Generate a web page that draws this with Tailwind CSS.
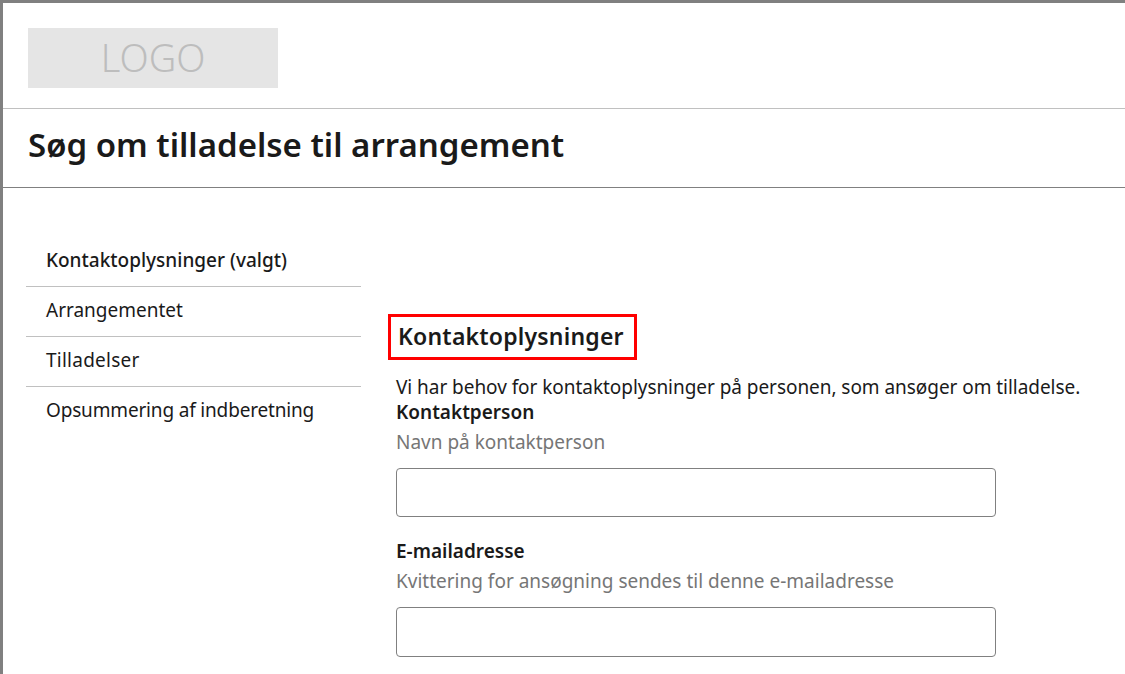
<!DOCTYPE html>
<html lang="da">
<head>
  <meta charset="UTF-8" />
  <title>Søg om tilladelse til arrangement</title>
  <script src="https://cdn.jsdelivr.net/npm/@tailwindcss/browser@4"></script>
</head>
<body class="bg-white h-[674px] overflow-hidden font-['Noto_Sans',sans-serif] text-[#1a1a1a]">
  <div class="h-full border-t-[3px] border-l-[3px] border-[#808080] overflow-hidden">
    <!-- Header -->
    <header class="h-[106px] pl-[25px] pt-[25px] border-b border-[#c0c0c0]">
      <div class="w-[250px] h-[60px] pb-[2px] bg-[#e5e5e5] flex items-center justify-center text-[38px] font-light text-[#bdbdbd]">LOGO</div>
    </header>
    <div class="h-[79px] pl-[25px] pb-[6px] flex items-center border-b border-[#808080]">
      <h1 class="text-[33px] font-semibold whitespace-nowrap">Søg om tilladelse til arrangement</h1>
    </div>

    <div class="flex">
      <!-- Side menu -->
      <nav class="w-[335px] ml-[23px] mt-[48px] shrink-0 text-[19px]">
        <div class="h-[51px] pl-5 pb-[2px] flex items-center border-b border-[#c0c0c0] font-medium whitespace-nowrap">Kontaktoplysninger (valgt)</div>
        <div class="h-[50px] pl-5 pb-[2px] flex items-center border-b border-[#c0c0c0]">Arrangementet</div>
        <div class="h-[50px] pl-5 pb-[2px] flex items-center border-b border-[#c0c0c0] tracking-[0.25px]">Tilladelser</div>
        <div class="h-[48px] pl-5 pb-[2px] flex items-center tracking-[-0.17px]">Opsummering af indberetning</div>
      </nav>

      <!-- Form -->
      <main class="ml-[27px] mt-[126px] flex-1 text-[19px]">
        <h2 class="w-[249px] border-[3px] border-[#ff0000] px-[7px] pb-[2px] h-[46px] flex items-center text-[23px] font-semibold tracking-[0.2px] whitespace-nowrap">Kontaktoplysninger</h2>
        <p class="ml-[8px] mt-[14px] leading-[27px] tracking-[-0.05px] whitespace-nowrap">Vi har behov for kontaktoplysninger på personen, som ansøger om tilladelse.</p>
        <label class="block ml-[8px] leading-[23px] font-semibold">Kontaktperson</label>
        <p class="ml-[8px] mt-[7px] leading-[23px] text-[#767676]">Navn på kontaktperson</p>
        <input type="text" class="block ml-[8px] mt-[14px] w-[600px] h-[49px] border border-[#808080] rounded-[4px]" />
        <label class="block ml-[8px] mt-[23px] leading-[23px] font-semibold">E-mailadresse</label>
        <p class="ml-[8px] mt-[7px] leading-[23px] text-[#767676]">Kvittering for ansøgning sendes til denne e-mailadresse</p>
        <input type="text" class="block ml-[8px] mt-[14px] w-[600px] h-[50px] border border-[#808080] rounded-[4px]" />
      </main>
    </div>
  </div>
</body>
</html>
